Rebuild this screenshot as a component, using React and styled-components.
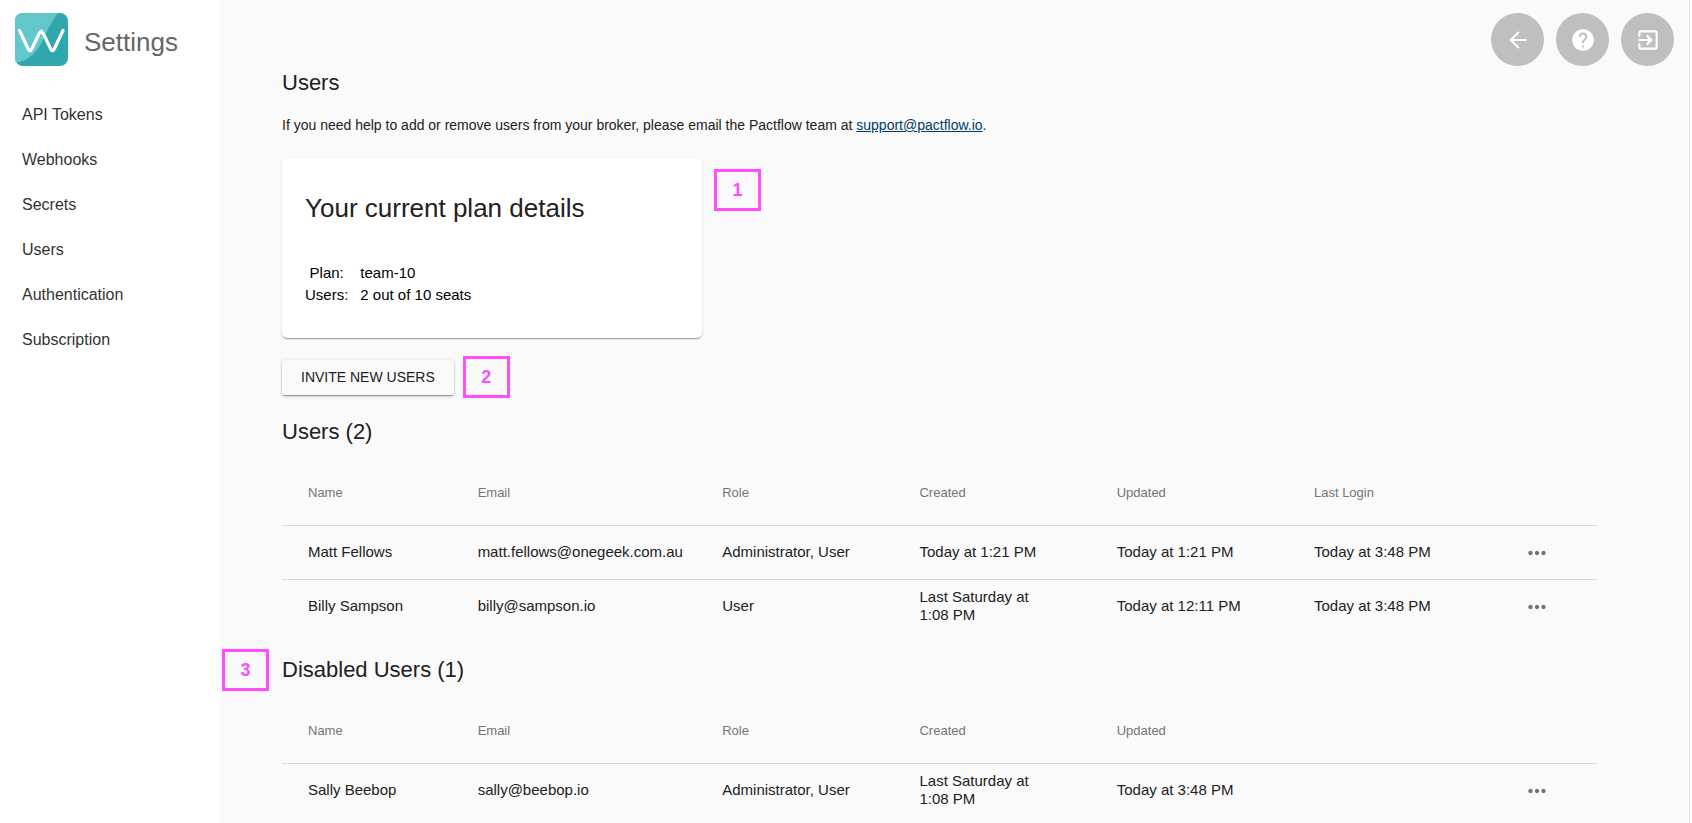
import React from "react";
import styled, { createGlobalStyle } from "styled-components";
import { MdArrowBack, MdHelp, MdExitToApp, MdMoreHoriz } from "react-icons/md";

const GlobalStyle = createGlobalStyle`
  *, *::before, *::after { box-sizing: border-box; }
  body {
    margin: 0;
    background: #fafafa;
    color: #212121;
    font-family: "Liberation Sans", Helvetica, Arial, sans-serif;
    font-size: 15px;
    line-height: 18px;
  }
`;

const Page = styled.div`
  display: flex;
  min-height: 100vh;
`;

const Sidebar = styled.aside`
  flex: 0 0 220px;
  background: #fff;
`;

const Brand = styled.div`
  display: flex;
  align-items: center;
  gap: 16px;
  padding: 13px 15px;
`;

const Logo = styled.svg`
  display: block;
  width: 53px;
  height: 53px;
`;

const BrandTitle = styled.span`
  padding-top: 4px;
  color: #666;
  font-size: 26px;
  line-height: 32px;
`;

const NavList = styled.ul`
  list-style: none;
  margin: 13px 0 0;
  padding: 0;
`;

const NavLink = styled.a`
  display: block;
  padding: 0 22px;
  color: #333;
  font-size: 16px;
  line-height: 45px;
  text-decoration: none;
`;

const Main = styled.main`
  flex: 1;
  min-width: 0;
  margin-right: 2px;
  border-right: 1px solid #e4e4e4;
`;

const Actions = styled.div`
  display: flex;
  justify-content: flex-end;
  gap: 12px;
  padding: 13px 15px 0;
`;

const RoundButton = styled.button`
  display: flex;
  align-items: center;
  justify-content: center;
  width: 53px;
  height: 53px;
  padding: 0;
  border: 0;
  border-radius: 50%;
  background: #bfbfbf;
  color: #fff;
  font-size: 26px;
  cursor: pointer;
`;

const Content = styled.div`
  padding: 1px 92px 0 62px;
`;

const Heading = styled.h2`
  position: relative;
  margin: 0 0 16px;
  font-size: 22px;
  font-weight: 400;
  line-height: 32px;
`;

const HelpText = styled.p`
  margin: 0 0 23px;
  font-size: 14px;
  line-height: 20px;
`;

const MailLink = styled.a`
  color: #003d66;
`;

const MarkedRow = styled.div`
  display: flex;
  align-items: ${(p) => p.$align || "center"};
  gap: ${(p) => p.$gap}px;
  margin-bottom: 18px;
`;

const Marker = styled.span`
  display: flex;
  flex: none;
  align-items: center;
  justify-content: center;
  width: 47px;
  height: 42px;
  border: 3px solid #ff4dff;
  color: #ff4dff;
  font-size: 18px;
  font-weight: 700;
`;

const CardMarker = styled(Marker)`
  margin-top: 11px;
`;

const SideMarker = styled(Marker)`
  position: absolute;
  top: -5px;
  right: calc(100% + 13px);
`;

const Card = styled.section`
  width: 420px;
  padding: 34px 23px 32px;
  border-radius: 5px;
  background: #fff;
  box-shadow: 0 2px 1px -1px rgba(0, 0, 0, 0.2), 0 1px 1px rgba(0, 0, 0, 0.14),
    0 1px 3px rgba(0, 0, 0, 0.12);
`;

const CardTitle = styled.h3`
  margin: 0 0 38px;
  font-size: 26px;
  font-weight: 400;
  line-height: 32px;
`;

const PlanList = styled.dl`
  display: grid;
  grid-template-columns: max-content 1fr;
  column-gap: 12px;
  margin: 0;
  color: #000;
  line-height: 22px;
`;

const PlanLabel = styled.dt`
  text-align: center;
`;

const PlanValue = styled.dd`
  margin: 0;
`;

const InviteButton = styled.button`
  height: 35px;
  padding: 0 19px;
  border: 0;
  border-radius: 3px;
  background: #fafafa;
  color: inherit;
  font-family: inherit;
  font-size: 14px;
  text-transform: uppercase;
  cursor: pointer;
  box-shadow: 0 3px 1px -2px rgba(0, 0, 0, 0.2), 0 1px 2px rgba(0, 0, 0, 0.24),
    0 1px 4px rgba(0, 0, 0, 0.12);
`;

const UserTable = styled.table`
  width: 100%;
  margin-bottom: 21px;
  border-collapse: separate;
  border-spacing: 0;
  table-layout: fixed;
`;

const Column = styled.col`
  width: ${(p) => p.$width};
`;

const HeadCell = styled.th`
  height: 62px;
  padding: 0 8px 3px 26px;
  border-bottom: 1px solid #dadada;
  color: #757575;
  font-size: 13px;
  font-weight: 400;
  text-align: left;
`;

const Cell = styled.td`
  height: 53px;
  padding: 0 8px 2px 26px;

  tr:not(:last-child) > & {
    height: 54px;
    border-bottom: 1px solid #dadada;
  }
`;

const MenuCell = styled(Cell)`
  padding: 0 8px 0 0;
`;

const Time = styled.span`
  white-space: nowrap;
`;

const MenuButton = styled.button`
  display: block;
  margin: 0 auto;
  padding: 0;
  border: 0;
  background: none;
  color: #757575;
  font-size: 26px;
  line-height: 0;
  cursor: pointer;
`;

const navItems = ["API Tokens", "Webhooks", "Secrets", "Users", "Authentication", "Subscription"];
const columnWidths = ["12.9%", "18.6%", "15%", "15%", "15%", "15%", "8.5%"];

const at = (day, time) => (
  <>
    {day} at <Time>{time}</Time>
  </>
);

const activeUsers = [
  ["Matt Fellows", "matt.fellows@onegeek.com.au", "Administrator, User", at("Today", "1:21 PM"), at("Today", "1:21 PM"), at("Today", "3:48 PM")],
  ["Billy Sampson", "billy@sampson.io", "User", at("Last Saturday", "1:08 PM"), at("Today", "12:11 PM"), at("Today", "3:48 PM")],
];
const disabledUsers = [
  ["Sally Beebop", "sally@beebop.io", "Administrator, User", at("Last Saturday", "1:08 PM"), at("Today", "3:48 PM"), ""],
];

function Users({ labelledBy, headings, users }) {
  return (
    <UserTable aria-labelledby={labelledBy}>
      <colgroup>
        {columnWidths.map((width, i) => (
          <Column key={i} $width={width} />
        ))}
      </colgroup>
      <thead>
        <tr>
          {headings.map((text, i) => (
            <HeadCell key={i} scope="col">{text}</HeadCell>
          ))}
        </tr>
      </thead>
      <tbody>
        {users.map((user) => (
          <tr key={user[1]}>
            {user.map((value, i) => (
              <Cell key={i}>{value}</Cell>
            ))}
            <MenuCell>
              <MenuButton type="button" aria-label={`Actions for ${user[0]}`}>
                <MdMoreHoriz />
              </MenuButton>
            </MenuCell>
          </tr>
        ))}
      </tbody>
    </UserTable>
  );
}

export default function App() {
  return (
    <>
      <GlobalStyle />
      <Page>
        <Sidebar>
          <Brand>
            <Logo viewBox="0 0 53 53" aria-hidden="true">
              <defs>
                <clipPath id="logo-shape">
                  <rect width="53" height="53" rx="8" />
                </clipPath>
              </defs>
              <g clipPath="url(#logo-shape)">
                <rect width="53" height="53" fill="#30a6ad" />
                <path d="M0 0H43C37 8 33 16 28 27C22 40 13 48 0 50Z" fill="#62c6cb" />
                <path
                  d="M4.500 17.500L13 35.500Q15 40 17 35.500L24.200 20.500Q26.200 16 28.200 20.500L35.500 35.500Q37.500 40 39.500 35.500L48 17.500"
                  fill="none"
                  stroke="#fff"
                  strokeWidth="3.2"
                  strokeLinecap="round"
                  strokeLinejoin="round"
                />
              </g>
            </Logo>
            <BrandTitle>Settings</BrandTitle>
          </Brand>
          <nav aria-label="Settings">
            <NavList>
              {navItems.map((item) => (
                <li key={item}>
                  <NavLink href="#">{item}</NavLink>
                </li>
              ))}
            </NavList>
          </nav>
        </Sidebar>
        <Main>
          <Actions>
            <RoundButton type="button" aria-label="Back"><MdArrowBack /></RoundButton>
            <RoundButton type="button" aria-label="Help"><MdHelp /></RoundButton>
            <RoundButton type="button" aria-label="Log out"><MdExitToApp /></RoundButton>
          </Actions>
          <Content>
            <Heading as="h1">Users</Heading>
            <HelpText>
              If you need help to add or remove users from your broker, please email the Pactflow team at{" "}
              <MailLink href="mailto:support@pactflow.io">support@pactflow.io</MailLink>.
            </HelpText>
            <MarkedRow $gap={12} $align="flex-start">
              <Card>
                <CardTitle>Your current plan details</CardTitle>
                <PlanList>
                  <PlanLabel>Plan:</PlanLabel>
                  <PlanValue>team-10</PlanValue>
                  <PlanLabel>Users:</PlanLabel>
                  <PlanValue>2 out of 10 seats</PlanValue>
                </PlanList>
              </Card>
              <CardMarker>1</CardMarker>
            </MarkedRow>
            <MarkedRow $gap={9}>
              <InviteButton type="button">Invite new users</InviteButton>
              <Marker>2</Marker>
            </MarkedRow>
            <Heading id="active-users">Users (2)</Heading>
            <Users
              labelledBy="active-users"
              headings={["Name", "Email", "Role", "Created", "Updated", "Last Login", ""]}
              users={activeUsers}
            />
            <Heading id="disabled-users">
              <SideMarker>3</SideMarker>
              Disabled Users (1)
            </Heading>
            <Users
              labelledBy="disabled-users"
              headings={["Name", "Email", "Role", "Created", "Updated", "", ""]}
              users={disabledUsers}
            />
          </Content>
        </Main>
      </Page>
    </>
  );
}
